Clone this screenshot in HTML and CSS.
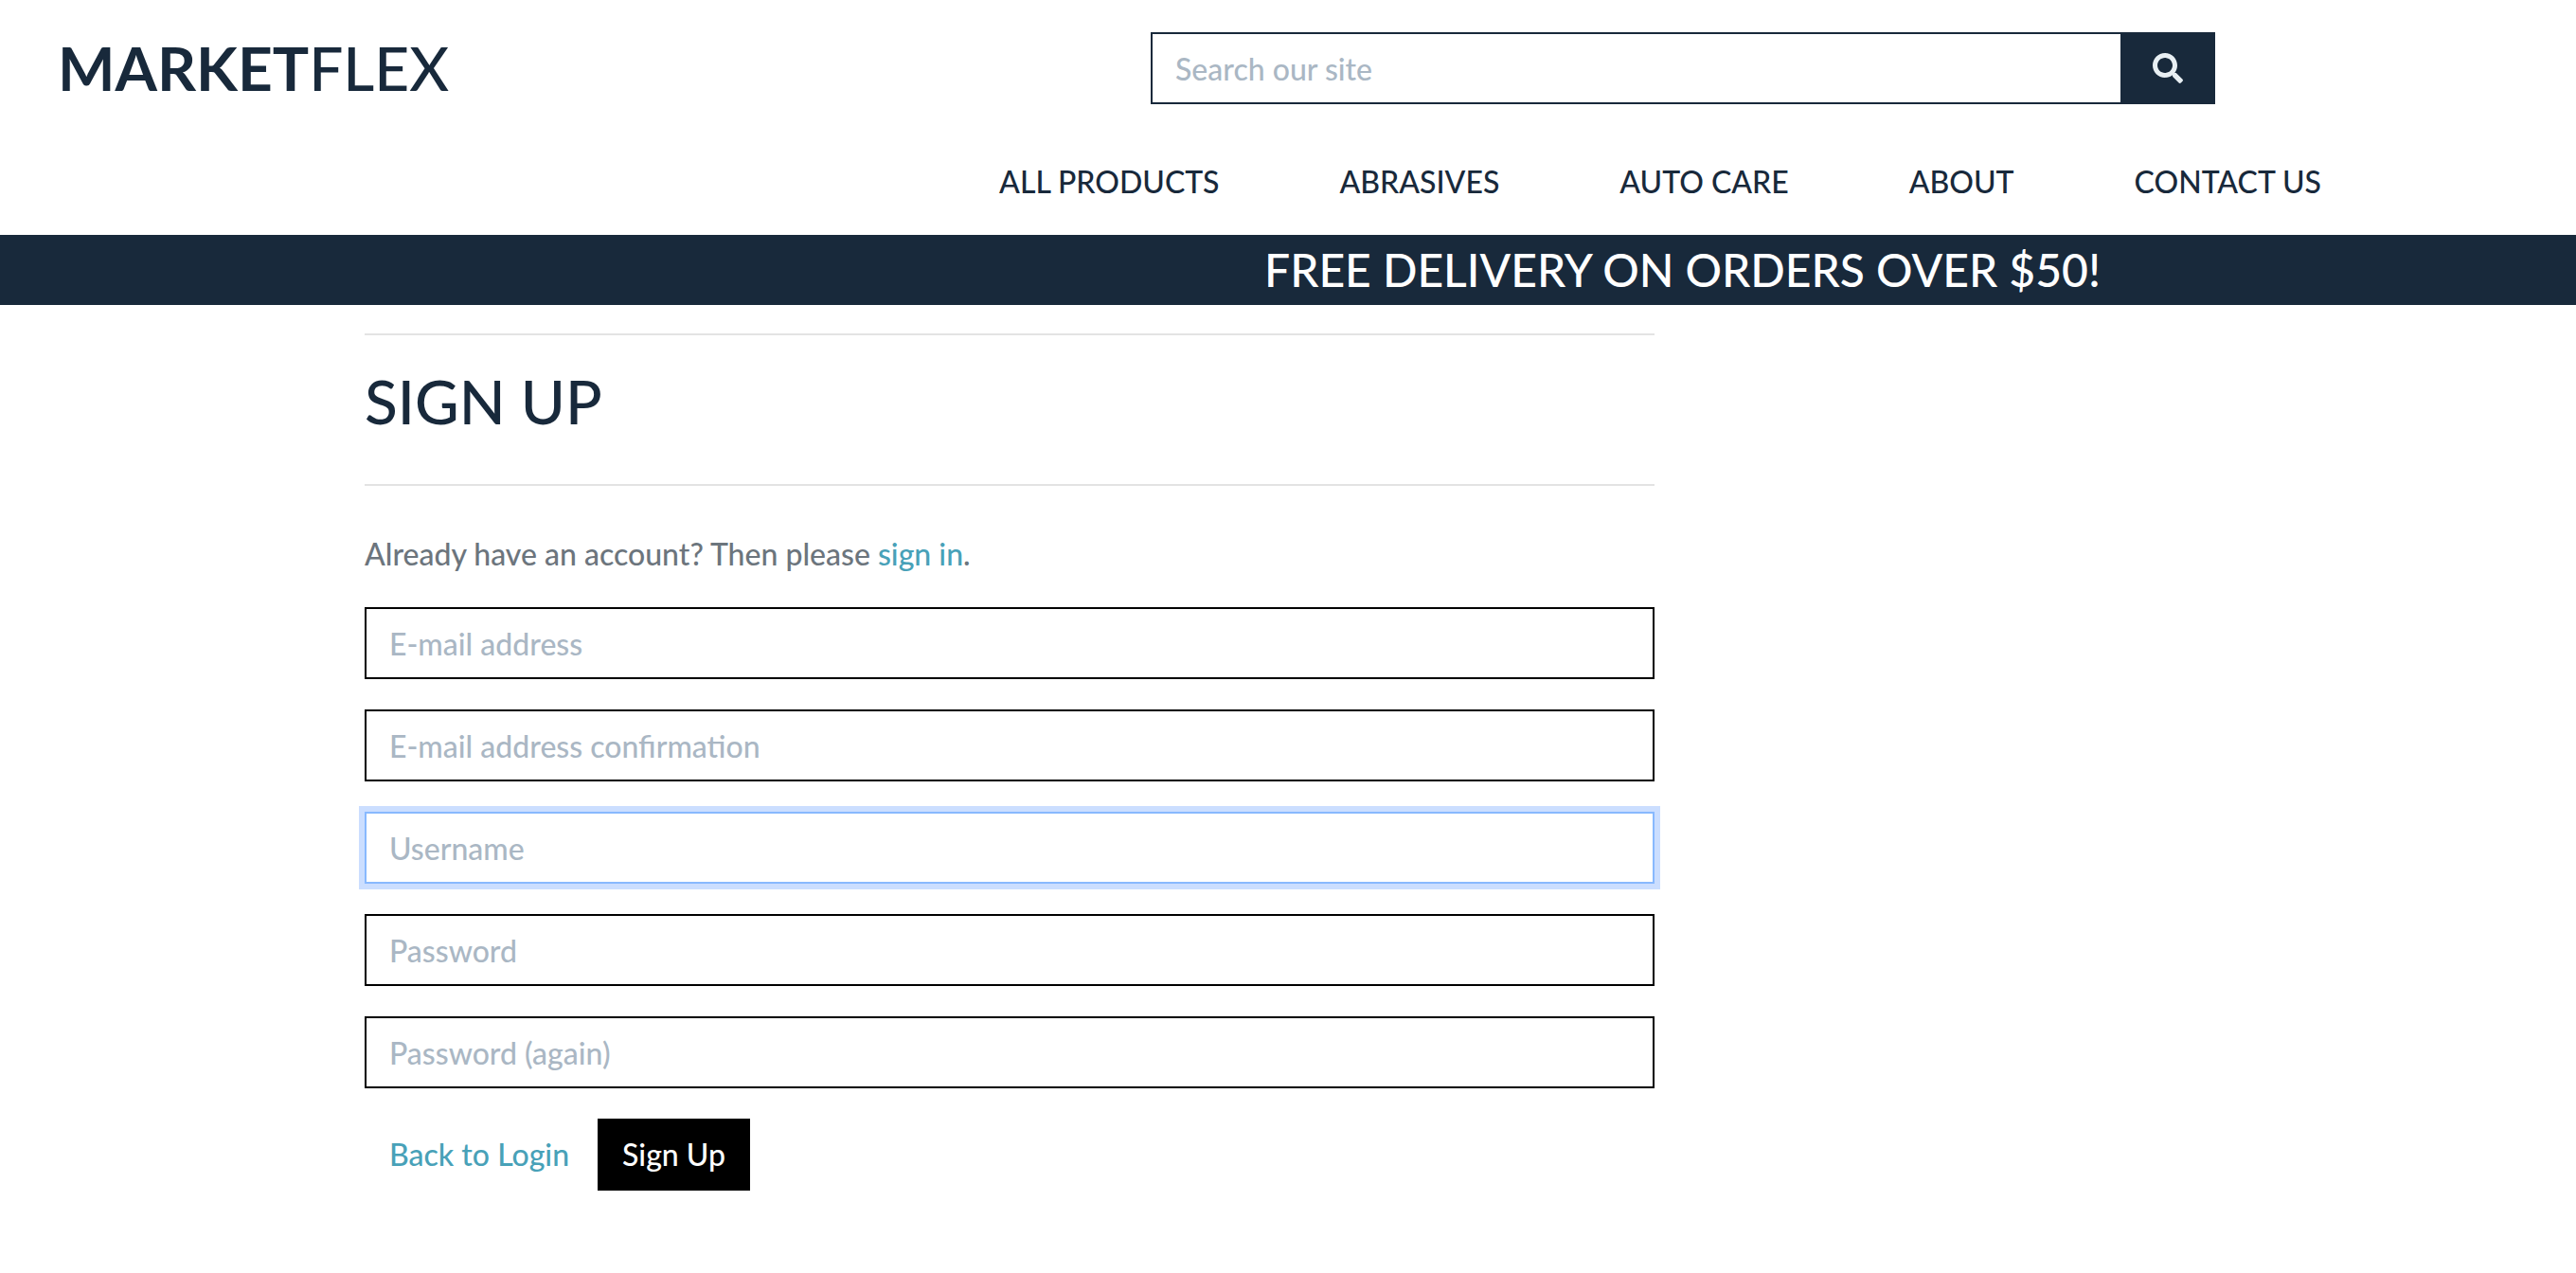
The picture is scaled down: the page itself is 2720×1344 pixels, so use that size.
FILE: index.html
```html
<!DOCTYPE html>
<html lang="en">
<head>
<meta charset="utf-8">
<meta name="viewport" content="width=device-width, initial-scale=1">
<title>MarketFlex</title>
<link rel="stylesheet" href="styles.css">
</head>
<body>
<header class="header">
  <a class="logo" href="/"><strong>MARKET</strong>FLEX</a>
  <form class="search" action="/products/" method="get">
    <input class="input search-input" name="q" type="text" aria-label="Search" placeholder="Search our site">
    <button class="search-button" type="submit" aria-label="Search">
      <svg class="icon" viewBox="0 0 512 512" aria-hidden="true"><path fill="currentColor" d="M505 442.7L405.3 343c-4.5-4.500-10.600-7-17-7H372c27.600-35.300 44-79.700 44-128C416 93.100 322.900 0 208 0S0 93.100 0 208s93.100 208 208 208c48.300 0 92.700-16.400 128-44v16.300c0 6.400 2.500 12.500 7 17l99.700 99.700c9.400 9.400 24.600 9.400 33.900 0l28.300-28.300c9.400-9.400 9.400-24.600.1-34zM208 336c-70.700 0-128-57.200-128-128 0-70.700 57.200-128 128-128 70.700 0 128 57.200 128 128 0 70.700-57.200 128-128 128z"/></svg>
    </button>
  </form>
</header>
<nav class="nav">
  <a href="/products/">ALL PRODUCTS</a>
  <a href="/abrasives/">ABRASIVES</a>
  <a href="/auto-care/">AUTO CARE</a>
  <a href="/about/">ABOUT</a>
  <a href="/contact/">CONTACT US</a>
</nav>
<div class="banner"><p class="banner-text">FREE DELIVERY ON ORDERS OVER $50!</p></div>
<main class="main">
  <section class="signup">
    <h1 class="title">SIGN UP</h1>
    <p class="intro">Already have an account? Then please <a class="link" href="/login/">sign in</a>.</p>
    <form class="form" action="/signup/" method="post">
      <input class="input" name="email" type="email" aria-label="E-mail" placeholder="E-mail address">
      <input class="input" name="email2" type="email" aria-label="E-mail (again)" placeholder="E-mail address confirmation">
      <input class="input is-focused" name="username" type="text" aria-label="Username" placeholder="Username">
      <input class="input" name="password1" type="password" aria-label="Password" placeholder="Password">
      <input class="input" name="password2" type="password" aria-label="Password (again)" placeholder="Password (again)">
      <div class="actions">
        <a class="button link" href="/login/">Back to Login</a>
        <button class="button button-primary" type="submit">Sign Up</button>
      </div>
    </form>
  </section>
</main>
</body>
</html>
```
FILE: styles.css
```css
*, *::before, *::after { box-sizing: border-box; }

body {
  margin: 0;
  background: #fff;
  color: #18293b;
  font: 500 32px/48px Lato, sans-serif;
}

a { color: inherit; text-decoration: none; }
p, h1 { margin: 0; }

.header {
  display: grid;
  grid-template-columns: 1215fr 1124fr 381fr;
  align-items: center;
  padding-top: 34px;
}

.logo {
  padding-left: 61px;
  font-size: 64px;
  line-height: 76px;
}
.logo strong { font-weight: 700; }

.search { display: flex; }

.input {
  display: block;
  width: 100%;
  height: 76px;
  margin: 0;
  padding: 12px 24px;
  border: 2px solid #000;
  border-radius: 0;
  background: #fff;
  color: #495057;
  font: inherit;
  outline: 0;
}
.input::placeholder { color: #aab7c4; opacity: 1; }
.input:focus, .is-focused {
  border-color: #88b9fe;
  box-shadow: 0 0 0 6px #cbdeff;
}

.search-input { flex: 1; border-color: #18293b; border-right: 0; }

.search-button {
  display: flex;
  align-items: center;
  justify-content: center;
  width: 100px;
  padding: 0;
  border: 0;
  background: #18293b;
  color: #e8eff3;
}
.icon { width: 32px; height: 32px; }

.nav {
  display: flex;
  justify-content: flex-end;
  gap: 127px;
  padding: 58px 269px 32px 0;
}

.banner {
  display: grid;
  grid-template-columns: 1335fr 1385fr;
  background: #18293b;
  color: #fff;
}
.banner-text {
  grid-column: 2;
  font-size: 48px;
  line-height: 74px;
  white-space: nowrap;
}

.main {
  display: grid;
  grid-template-columns: 385fr 1362fr 973fr;
  padding-top: 30px;
}
.signup { grid-column: 2; }

.title {
  padding: 32px 0 50px;
  border: solid #e3e3e3;
  border-width: 2px 0;
  font-size: 64px;
  font-weight: 500;
  line-height: 75px;
}

.intro { padding: 48px 0 32px; color: #6c757d; }
.link { color: #48a1b8; }

.form { display: grid; gap: 32px; }

.actions { display: flex; gap: 4px; }
.button {
  padding: 12px 24px;
  border: 2px solid transparent;
  font: inherit;
}
.button-primary { border-color: #000; background: #000; color: #fff; }
```
